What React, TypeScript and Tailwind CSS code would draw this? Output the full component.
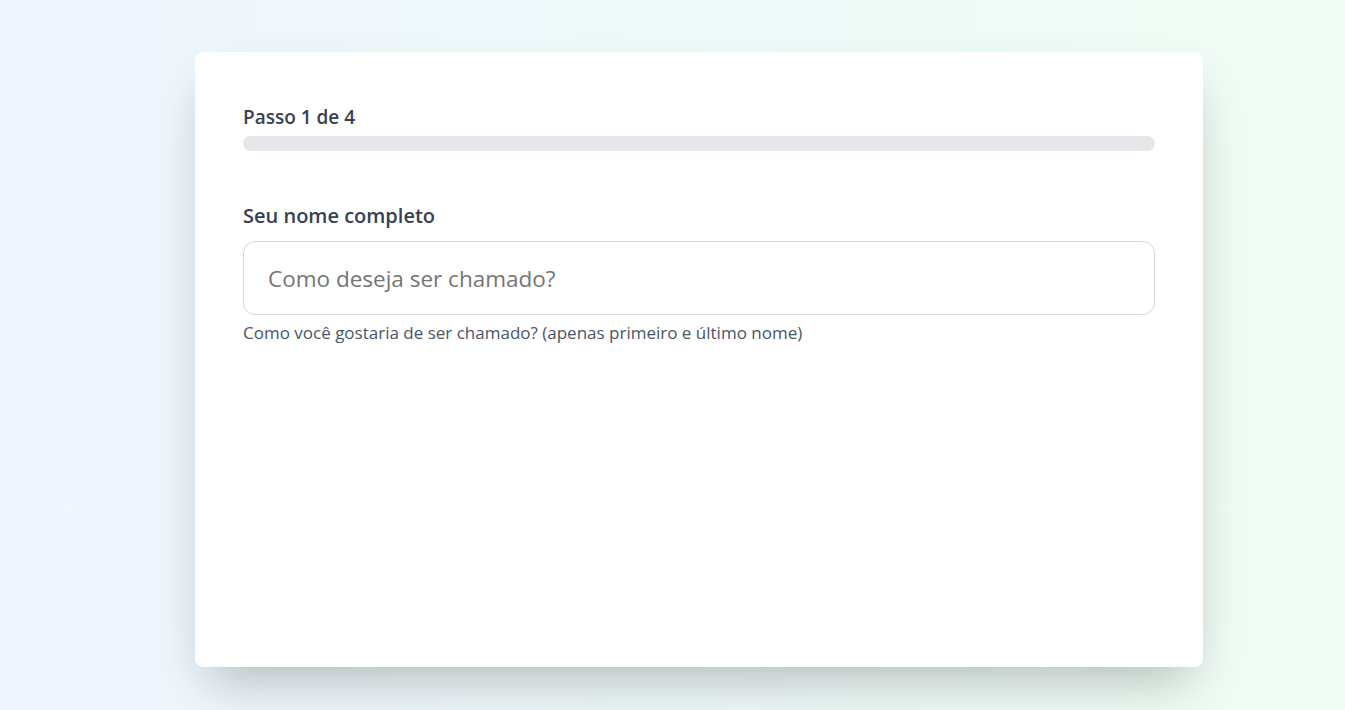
import React from "react";

export default function App() {
  return (
    <div
      className="min-h-[710px] w-full bg-gradient-to-r from-blue-50 to-green-50 pl-[195px] pt-[52px]"
      style={{ fontFamily: '"Open Sans", "Noto Sans", sans-serif' }}
    >
      <div className="h-[615px] w-[1008px] rounded-lg bg-white px-12 pt-[51px] pb-12 shadow-2xl">
        <div className="text-[19px] leading-7 font-semibold text-gray-700">Passo 1 de 4</div>
        <div className="mt-[5px] h-[15px] w-full rounded-full bg-gray-200" />
        <label className="mt-[51px] block text-[20px] leading-7 font-semibold text-gray-700">
          Seu nome completo
        </label>
        <input
          type="text"
          placeholder="Como deseja ser chamado?"
          className="mt-[11px] block h-[74px] w-full rounded-xl border border-gray-300 px-6 text-[22.5px] text-gray-700 placeholder:text-[#757575] outline-none"
        />
        <p className="mt-1.5 text-[17px] leading-6 text-gray-600">
          Como você gostaria de ser chamado? (apenas primeiro e último nome)
        </p>
      </div>
    </div>
  );
}
